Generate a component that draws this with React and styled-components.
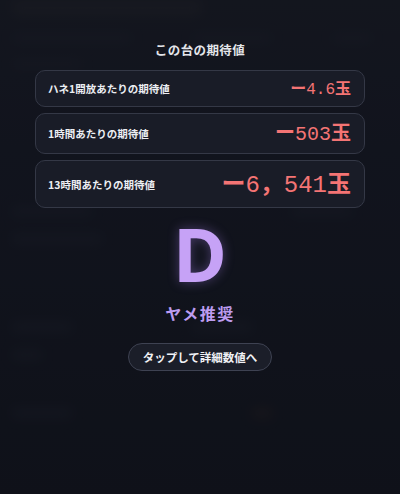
import React from "react";
import styled, { createGlobalStyle } from "styled-components";

const Global = createGlobalStyle`
  html, body { margin: 0; padding: 0; background: #11141c; }
  body { width: 400px; height: 494px; overflow: hidden; }
  #root { width: 400px; height: 494px; }
`;

const JP = `"Noto Sans CJK JP", "Noto Sans", sans-serif`;
const MONO = `"Liberation Mono", "Noto Sans CJK JP", monospace`;

const Screen = styled.div`
  position: relative;
  width: 400px;
  height: 494px;
  overflow: hidden;
  background: linear-gradient(180deg, #191c25 0%, #151823 30%, #10131b 100%);
  font-family: ${JP};
`;

/* faint, blurred page under the overlay */
const Backdrop = styled.div`
  display: flex;
  flex-direction: column;
  gap: 18px;
  padding: 0 12px;
  filter: blur(6px);
  opacity: 0.4;
`;

const BackHeader = styled.div`
  width: 190px;
  height: 16px;
  background: #2e2e30;
  border-radius: 0 0 6px 6px;
`;

const BackRow = styled.div`
  display: flex;
  gap: ${(p) => p.$gap || 20}px;
  margin-top: ${(p) => p.$top || 0}px;
`;

const BackBlock = styled.div`
  width: ${(p) => p.$w}px;
  height: ${(p) => p.$h || 10}px;
  background: ${(p) => p.$c || "#262a36"};
  border-radius: 3px;
`;

const Overlay = styled.div`
  position: absolute;
  inset: 0;
  background: rgba(14, 16, 24, 0.5);
  display: flex;
  flex-direction: column;
  align-items: center;
  padding-top: 41px;
`;

const Title = styled.h2`
  margin: 0 0 11px;
  font-size: 12.5px;
  line-height: 18px;
  font-weight: 700;
  color: #e4e5ea;
  letter-spacing: 0.4px;
`;

const Cards = styled.div`
  width: 330px;
  display: flex;
  flex-direction: column;
  gap: 6px;
`;

const Card = styled.div`
  height: ${(p) => p.$h}px;
  box-sizing: border-box;
  display: flex;
  align-items: center;
  justify-content: space-between;
  padding: 0 13px 0 12px;
  border: 1px solid #343846;
  border-radius: 10px;
  background: rgba(26, 29, 40, 0.92);
`;

const Label = styled.span`
  font-size: 10.5px;
  font-weight: 700;
  color: #eceef3;
`;

const Value = styled.span`
  font-family: ${MONO};
  font-size: ${(p) => p.$size}px;
  line-height: 1;
  color: #f47474;
  white-space: nowrap;
  display: flex;
  align-items: baseline;
`;

const Cjk = styled.span`
  font-family: ${JP};
  font-weight: 700;
`;

const Grade = styled.div`
  margin-top: 8px;
  font-family: "Noto Sans", "Open Sans", sans-serif;
  font-size: 73px;
  font-weight: 700;
  line-height: 76px;
  color: #c6a2f6;
  text-shadow: 0 0 12px rgba(180, 140, 255, 0.35);
`;

const Verdict = styled.div`
  margin-top: 10px;
  font-size: 16px;
  font-weight: 700;
  letter-spacing: 1.5px;
  line-height: 22px;
  color: #bd9cf0;
`;

const DetailButton = styled.button`
  margin-top: 19px;
  width: 144px;
  height: 28px;
  border-radius: 14px;
  border: 1px solid #3e4252;
  background: #1b1e29;
  color: #f0f1f5;
  font-family: ${JP};
  font-size: 11.5px;
  font-weight: 700;
  padding: 0;
  cursor: pointer;
`;

function Amount({ sign, parts, size }) {
  return (
    <Value $size={size}>
      <Cjk>{sign}</Cjk>
      {parts.map((p, i) =>
        p === "，" ? <Cjk key={i}>{p}</Cjk> : <span key={i}>{p}</span>
      )}
      <Cjk>玉</Cjk>
    </Value>
  );
}

const rows = [
  { label: "ハネ1開放あたりの期待値", parts: ["4.6"], size: 16, h: 37 },
  { label: "1時間あたりの期待値", parts: ["503"], size: 20, h: 41 },
  { label: "13時間あたりの期待値", parts: ["6", "，", "541"], size: 24, h: 48 },
];

export default function App() {
  return (
    <>
      <Global />
      <Screen>
        <Backdrop>
          <BackHeader />
          <BackRow $gap={60}>
            <BackBlock $w={120} $h={8} />
            <BackBlock $w={80} $h={8} />
            <BackBlock $w={40} $h={8} />
          </BackRow>
          <BackRow>
            <BackBlock $w={70} $h={8} />
          </BackRow>
          <BackRow $gap={200} $top={120}>
            <BackBlock $w={80} $h={10} />
            <BackBlock $w={60} $h={10} />
          </BackRow>
          <BackRow>
            <BackBlock $w={90} $h={10} />
          </BackRow>
          <BackRow $gap={120} $top={60}>
            <BackBlock $w={60} $h={10} />
            <BackBlock $w={60} $h={10} />
          </BackRow>
          <BackRow $gap={140}>
            <BackBlock $w={30} $h={10} />
            <BackBlock $w={20} $h={10} />
          </BackRow>
          <BackRow $gap={180} $top={30}>
            <BackBlock $w={60} $h={10} />
            <BackBlock $w={20} $h={10} $c="#3a2a22" />
          </BackRow>
        </Backdrop>
        <Overlay>
          <Title>この台の期待値</Title>
          <Cards>
            {rows.map((r) => (
              <Card key={r.label} $h={r.h}>
                <Label>{r.label}</Label>
                <Amount sign="ー" parts={r.parts} size={r.size} />
              </Card>
            ))}
          </Cards>
          <Grade>D</Grade>
          <Verdict>ヤメ推奨</Verdict>
          <DetailButton>タップして詳細数値へ</DetailButton>
        </Overlay>
      </Screen>
    </>
  );
}
